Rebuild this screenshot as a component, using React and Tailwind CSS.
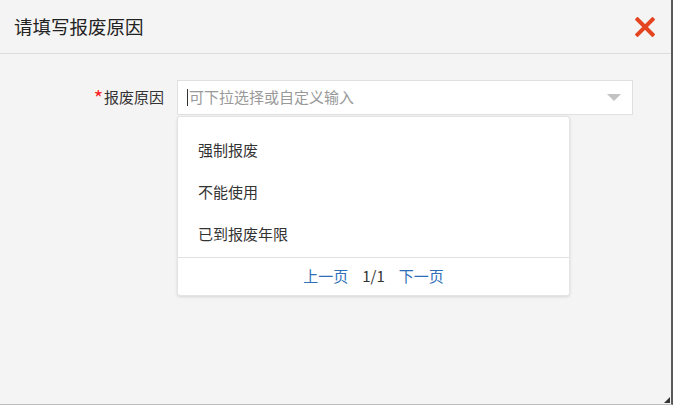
import React from "react";

const reasons = ["强制报废", "不能使用", "已到报废年限"];

const font = { fontFamily: '"Microsoft YaHei", "Noto Sans CJK SC", sans-serif' };

function CloseIcon() {
  return (
    <svg width="20" height="20" viewBox="0 0 20 20">
      <path d="M2.5 2.5 L17.5 17.5 M17.5 2.5 L2.5 17.5" stroke="#e4441f" strokeWidth="4" strokeLinecap="square" />
    </svg>
  );
}

export default function App() {
  return (
    <div
      className="w-[673px] h-[405px] bg-[#f4f4f4] border-r-2 border-b border-r-[#5a5a5a] border-b-[#bbb] relative overflow-hidden text-[#333]"
      style={font}
    >
      {/* header */}
      <div className="h-[54px] border-b border-[#dedede] flex items-center justify-between pl-[14px] pr-[16px]">
        <span className="text-[18.5px] leading-none text-[#222]">请填写报废原因</span>
        <CloseIcon />
      </div>

      {/* form row */}
      <div className="flex items-start pt-[26px]">
        <label className="w-[164px] text-right text-[15px] leading-[34px] text-[#333] flex justify-end items-center">
          <span className="text-[#ff2020] text-[20px] leading-none mt-[2px] mr-px">*</span>报废原因
        </label>
        <div className="ml-[13px] w-[456px] relative">
          <div className="h-[35px] bg-white border border-[#e0e0e0] flex items-center pl-[9px] pr-[10px]">
            <span className="w-px h-[17px] bg-[#333]" />
            <span className="text-[15px] text-[#999] ml-px flex-1">可下拉选择或自定义输入</span>
            <svg width="14" height="8" viewBox="0 0 14 8" className="mr-[1px]">
              <path d="M0 0 L14 0 L7 7 Z" fill="#c2c2c2" />
            </svg>
          </div>

          {/* dropdown */}
          <div className="absolute left-0 top-[36px] w-[393px] bg-white rounded-[3px] border border-[#e4e4e4] shadow-[0_1px_3px_rgba(0,0,0,0.12)]">
            <ul className="pt-[12px] pb-[2px]">
              {reasons.map((r) => (
                <li key={r} className="h-[42px] flex items-center pl-[20px] text-[15px] text-[#333]">
                  {r}
                </li>
              ))}
            </ul>
            <div className="border-t border-[#e2e2e2] h-[38px] flex items-center justify-center gap-[14px] text-[15px]">
              <span className="text-[#2e6fb8]">上一页</span>
              <span className="text-[#333]">1/1</span>
              <span className="text-[#2e6fb8]">下一页</span>
            </div>
          </div>
        </div>
      </div>

      {/* resize grip */}
      <svg width="6" height="6" viewBox="0 0 6 6" className="absolute right-[1px] bottom-[1px]">
        <path d="M6 0 L6 6 L0 6 Z" fill="#333" />
      </svg>
    </div>
  );
}
